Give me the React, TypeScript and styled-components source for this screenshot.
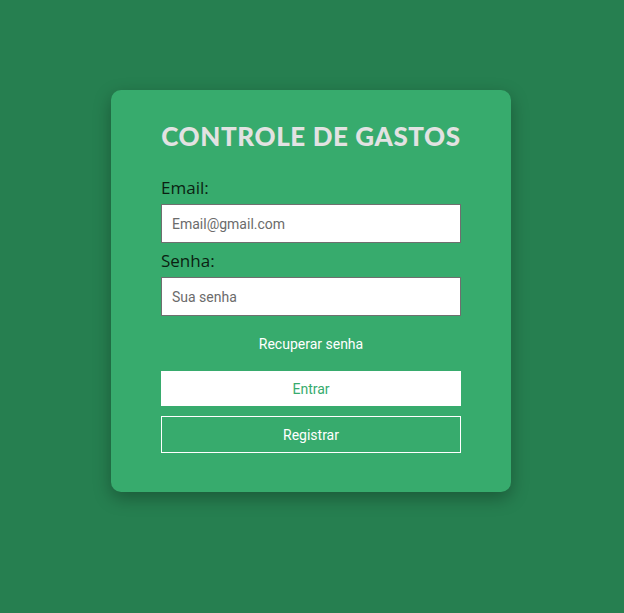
import React from "react";
import styled, { createGlobalStyle } from "styled-components";

const GlobalStyle = createGlobalStyle`
  html, body { margin: 0; padding: 0; background: #267f50; }
  body { font-family: Roboto, "Liberation Sans", Arial, sans-serif; }
  * { box-sizing: border-box; }
`;

const Page = styled.div`
  min-height: 613px;
  display: flex;
  justify-content: center;
  align-items: flex-start;
  padding-top: 90px;
`;

const Card = styled.form`
  width: 400px;
  height: 402px;
  background: #37ab6d;
  border-radius: 10px;
  box-shadow: 0 6px 18px rgba(0, 0, 0, 0.3);
  padding: 30px 50px 39px;
  display: flex;
  flex-direction: column;
  margin-left: -2px;
  & > * { flex-shrink: 0; }
`;

const Title = styled.h1`
  margin: 0 -30px 26px;
  white-space: nowrap;
  font-family: Lato, "DejaVu Sans", sans-serif;
  font-weight: 900;
  font-size: 26px;
  line-height: 32px;
  text-align: center;
  color: #e2e2e2;
  letter-spacing: 0.6px;
`;

const Label = styled.label`
  font-family: "Open Sans", "DejaVu Sans", sans-serif;
  font-size: 17px;
  line-height: 20px;
  color: #0b1f12;
  margin-bottom: 6px;
`;

const Input = styled.input<{ $mb?: number }>`
  width: 300px;
  height: 39px;
  border: 1px solid #6f6f6f;
  background: #fff;
  padding: 0 10px;
  font-family: Roboto, "Liberation Sans", Arial, sans-serif;
  font-size: 14px;
  color: #333;
  margin-bottom: ${(p) => p.$mb ?? 0}px;
  outline: none;
  &::placeholder { color: #6b6b6b; }
`;

const LinkButton = styled.button`
  background: none;
  border: none;
  color: #fff;
  font-family: Roboto, "Liberation Sans", Arial, sans-serif;
  font-weight: 400;
  font-size: 14px;
  align-self: center;
  padding: 0;
  margin: 20px 0 19px;
  line-height: 16px;
  cursor: pointer;
`;

const Button = styled.button<{ $outline?: boolean }>`
  width: 300px;
  height: ${(p) => (p.$outline ? 37 : 35)}px;
  font-family: Roboto, "Liberation Sans", Arial, sans-serif;
  font-weight: 400;
  font-size: 14px;
  cursor: pointer;
  background: ${(p) => (p.$outline ? "transparent" : "#fff")};
  color: ${(p) => (p.$outline ? "#fff" : "#37ab6d")};
  border: ${(p) => (p.$outline ? "1px solid #fff" : "none")};
  margin-top: ${(p) => (p.$outline ? 10 : 0)}px;
`;

export default function App() {
  return (
    <>
      <GlobalStyle />
      <Page>
        <Card onSubmit={(e) => e.preventDefault()}>
          <Title>CONTROLE DE GASTOS</Title>
          <Label htmlFor="email">Email:</Label>
          <Input id="email" type="email" placeholder="Email@gmail.com" $mb={8} />
          <Label htmlFor="senha">Senha:</Label>
          <Input id="senha" type="password" placeholder="Sua senha" />
          <LinkButton type="button">Recuperar senha</LinkButton>
          <Button type="submit">Entrar</Button>
          <Button type="button" $outline>Registrar</Button>
        </Card>
      </Page>
    </>
  );
}
